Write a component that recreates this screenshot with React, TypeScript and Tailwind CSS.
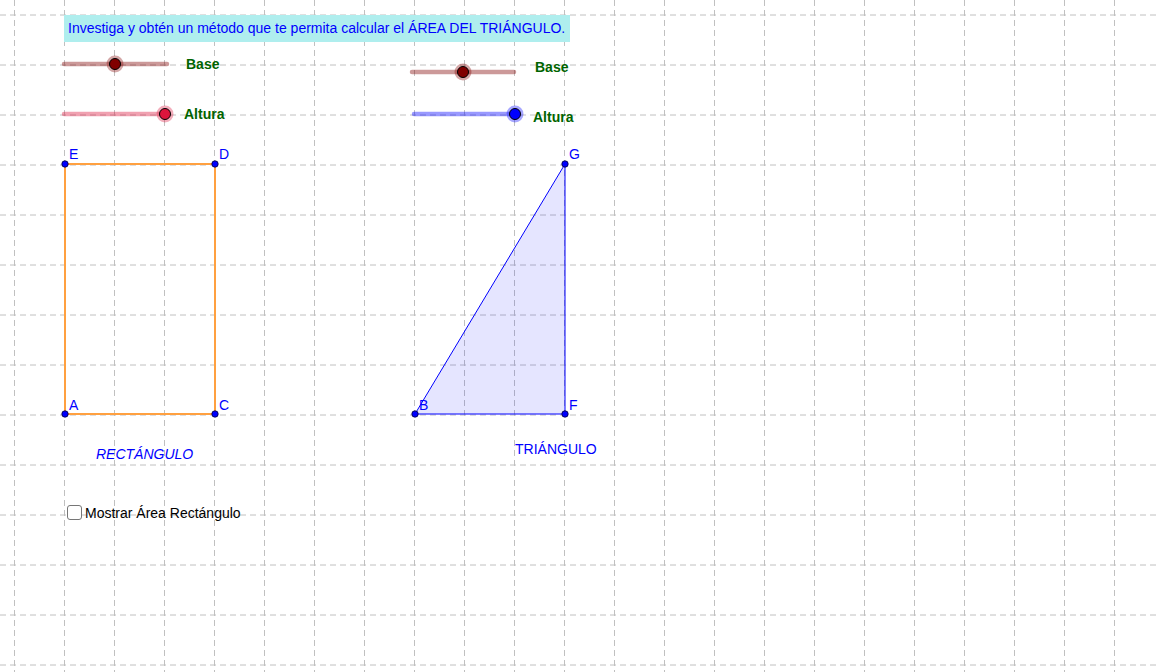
const gridX = Array.from({ length: 24 }, (_, i) => 14.5 + i * 50);
const gridY = Array.from({ length: 14 }, (_, i) => 15 + i * 50);

const font = { fontFamily: '"Liberation Sans", Arial, sans-serif' };

// slider row: track drawn in svg, green label next to it in flow
function Slider({ left, top, width, start, end, knob, color, label, labelClass }: {
  left: number; top: number; width: number; start: number; end: number; knob: number; color: string; label: string; labelClass: string;
}) {
  return (
    <div className="absolute flex items-center" style={{ left, top }}>
      <svg width={width} height={20}>
        <line x1={start} y1={10} x2={end} y2={10} stroke={color} strokeOpacity={0.4} strokeWidth={4.5} strokeLinecap="round" />
        <circle cx={knob} cy={10} r={8.5} fill={color} fillOpacity={0.35} />
        <circle cx={knob} cy={10} r={5.5} fill={color} stroke="#000" strokeWidth={1} />
      </svg>
      <span className={`relative text-[14px] leading-none font-bold text-[#006400] ${labelClass}`}>{label}</span>
    </div>
  );
}

function Point({ x, y }: { x: number; y: number }) {
  return <circle cx={x} cy={y} r={3.2} fill="#0000ff" stroke="#000033" strokeWidth={0.8} />;
}

function Label({ x, y, children, className = '' }: { x: number; y: number; children: React.ReactNode; className?: string }) {
  return (
    <div className={`absolute text-[14px] leading-none text-[#0000ff] ${className}`} style={{ left: x, top: y }}>
      {children}
    </div>
  );
}

export default function App() {
  return (
    <div className="relative w-[1160px] h-[672px] bg-white overflow-hidden" style={font}>
      <svg className="absolute inset-0" width={1160} height={672}>
        {gridX.map(x => (
          <line key={'x' + x} x1={x} y1={0} x2={x} y2={672} stroke="#c0c0c0" strokeWidth={1} strokeDasharray="6 4" />
        ))}
        {gridY.map(y => (
          <line key={'y' + y} x1={0} y1={y} x2={1160} y2={y} stroke="#c0c0c0" strokeWidth={1} strokeDasharray="6 4" />
        ))}

        <rect x={65} y={164} width={150} height={250} fill="none" stroke="#ffa040" strokeWidth={2} />
        <polygon points="415,414 565,414 565,164" fill="#0000ff" fillOpacity={0.1} stroke="#0000ff" strokeWidth={1} />

        <Point x={65} y={164} />
        <Point x={215} y={164} />
        <Point x={65} y={414} />
        <Point x={215} y={414} />
        <Point x={415} y={414} />
        <Point x={565} y={414} />
        <Point x={565} y={164} />
      </svg>

      <div className="absolute left-[64px] top-[15px] h-[27px] w-[506px] bg-[#afeeee] pl-[4px] text-[14px] leading-[27px] text-[#0000ff]">
        Investiga y obtén un método que te permita calcular el ÁREA DEL TRIÁNGULO.
      </div>

      <Slider left={55} top={54} width={122} start={9} end={112} knob={60} color="#800000" label="Base" labelClass="ml-[9px]" />
      <Slider left={55} top={104} width={120} start={9} end={110} knob={110} color="#dc143c" label="Altura" labelClass="ml-[9px]" />
      <Slider left={403} top={62} width={121} start={9} end={111} knob={60} color="#800000" label="Base" labelClass="ml-[11px] -top-[5px]" />
      <Slider left={405} top={104} width={120} start={9} end={110} knob={110} color="#0000ff" label="Altura" labelClass="ml-[8px] top-[3px]" />

      <Label x={69} y={147}>E</Label>
      <Label x={219} y={147}>D</Label>
      <Label x={69} y={398}>A</Label>
      <Label x={219} y={398}>C</Label>
      <Label x={419} y={398}>B</Label>
      <Label x={569} y={398}>F</Label>
      <Label x={569} y={147}>G</Label>
      <Label x={96} y={447} className="italic">RECTÁNGULO</Label>
      <Label x={515} y={442}>TRIÁNGULO</Label>

      <label className="absolute left-[67px] top-[505px] flex items-center gap-[3px] text-[14px] leading-none text-black">
        <span className="block h-[15px] w-[15px] rounded-[3px] border border-[#767676] bg-white" />
        <span>Mostrar Área Rectángulo</span>
      </label>
    </div>
  );
}
